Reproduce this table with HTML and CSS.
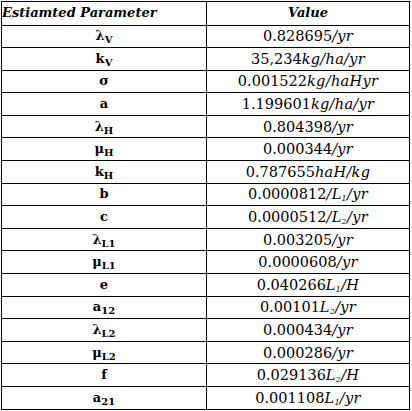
FILE: index.html
```html
<!DOCTYPE html>
<html>
<head>
<meta charset="utf-8">
<link rel="stylesheet" href="styles.css">
</head>
<body>
<table class="params">
  <thead>
    <tr><th class="h-left">Estiamted Parameter</th><th class="h-right">Value</th></tr>
  </thead>
  <tbody>
    <tr><td class="sym">λ<sub>V</sub></td><td class="val">0.828695<i>/yr</i></td></tr>
    <tr><td class="sym">k<sub>V</sub></td><td class="val">35,234<i>kg/ha/yr</i></td></tr>
    <tr><td class="sym">σ</td><td class="val">0.001522<i>kg/haHyr</i></td></tr>
    <tr><td class="sym">a</td><td class="val">1.199601<i>kg/ha/yr</i></td></tr>
    <tr><td class="sym">λ<sub>H</sub></td><td class="val">0.804398<i>/yr</i></td></tr>
    <tr><td class="sym">μ<sub>H</sub></td><td class="val">0.000344<i>/yr</i></td></tr>
    <tr><td class="sym">k<sub>H</sub></td><td class="val">0.787655<i>haH/kg</i></td></tr>
    <tr><td class="sym">b</td><td class="val">0.0000812<i>/L<sub>1</sub>/yr</i></td></tr>
    <tr><td class="sym">c</td><td class="val">0.0000512<i>/L<sub>2</sub>/yr</i></td></tr>
    <tr><td class="sym">λ<sub>L1</sub></td><td class="val">0.003205<i>/yr</i></td></tr>
    <tr><td class="sym">μ<sub>L1</sub></td><td class="val">0.0000608<i>/yr</i></td></tr>
    <tr><td class="sym">e</td><td class="val">0.040266<i>L<sub>1</sub>/H</i></td></tr>
    <tr><td class="sym">a<sub>12</sub></td><td class="val">0.00101<i>L<sub>2</sub>/yr</i></td></tr>
    <tr><td class="sym">λ<sub>L2</sub></td><td class="val">0.000434<i>/yr</i></td></tr>
    <tr><td class="sym">μ<sub>L2</sub></td><td class="val">0.000286<i>/yr</i></td></tr>
    <tr><td class="sym">f</td><td class="val">0.029136<i>L<sub>2</sub>/H</i></td></tr>
    <tr><td class="sym">a<sub>21</sub></td><td class="val">0.001108<i>L<sub>1</sub>/yr</i></td></tr>
  </tbody>
</table>
</body>
</html>
```
FILE: styles.css
```css
html, body {
  margin: 0;
  padding: 0;
  background: #fff;
}
body {
  padding: 1px 0 0 1px;
  font-family: "DejaVu Serif", "Liberation Serif", serif;
  font-size: 13px;
  color: #000;
}
.params {
  border-collapse: collapse;
  width: 409px;
  table-layout: fixed;
}
.params th,
.params td {
  border: 1px solid #000;
  height: 21.6px;
  padding: 0;
  line-height: 16px;
  vertical-align: middle;
}
.params th {
  font-weight: bold;
  font-style: italic;
  height: 22.5px;
}
.h-left {
  width: 204px;
  text-align: left;
  padding-left: 11px;
}
.h-right {
  text-align: center;
}
.sym {
  text-align: center;
  font-weight: bold;
}
.val {
  text-align: center;
  font-size: 14.5px;
}
.val i {
  font-style: italic;
  letter-spacing: 0.3px;
}
sub {
  font-size: 10px;
  line-height: 0;
  vertical-align: -3px;
}
.val sub {
  font-size: 8px;
  vertical-align: -2px;
}
```
